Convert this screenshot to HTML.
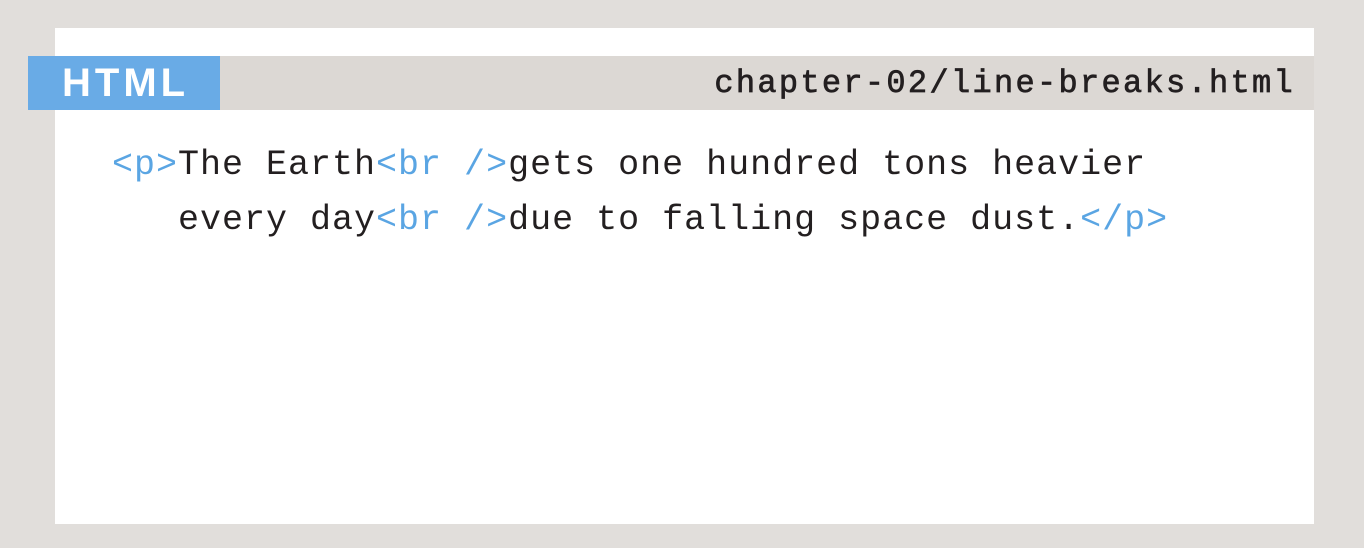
<!DOCTYPE html>
<html><head><style>
html,body{margin:0;padding:0}
body{width:1364px;height:548px;background:#e1dedb;position:relative;overflow:hidden}
.panel{position:absolute;left:55px;top:28px;width:1259px;height:496px;background:#fff}
.bar{position:absolute;left:55px;top:56px;width:1259px;height:54px;background:#dcd8d4}
.tag{position:absolute;left:28px;top:56px;width:192px;height:54px;background:#69abe6}
.tag span{position:absolute;left:34px;top:6px;font:bold 40px "Liberation Sans",sans-serif;color:#fff;letter-spacing:4px;line-height:42px}
.file{position:absolute;right:69px;top:64px;font:32px "Liberation Mono",monospace;letter-spacing:2.3px;color:#231f20;line-height:40px;-webkit-text-stroke:0.7px #231f20}
.code{position:absolute;left:112px;top:138px;font:35px "Liberation Mono",monospace;letter-spacing:1px;color:#231f20;line-height:55px;white-space:pre}
.b{color:#5aa5e3}
</style></head><body>
<div class="panel"></div>
<div class="bar"></div>
<div class="tag"><span>HTML</span></div>
<div class="file">chapter-02/line-breaks.html</div>
<div class="code"><span class="b">&lt;p&gt;</span>The Earth<span class="b">&lt;br /&gt;</span>gets one hundred tons heavier
   every day<span class="b">&lt;br /&gt;</span>due to falling space dust.<span class="b">&lt;/p&gt;</span></div>
</body></html>
